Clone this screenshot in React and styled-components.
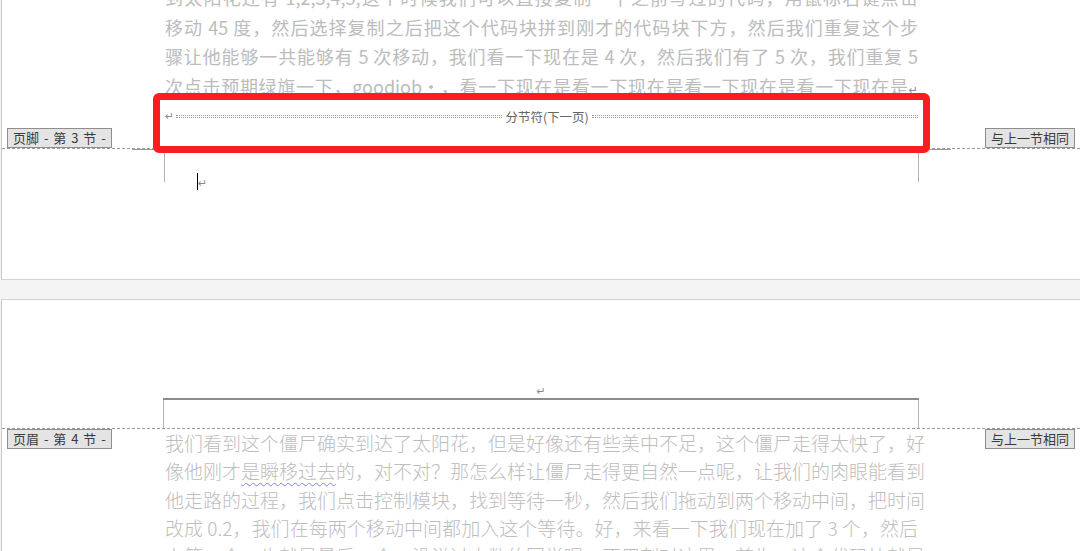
import styled, { createGlobalStyle } from "styled-components";

const GlobalStyle = createGlobalStyle`
  html, body {
    margin: 0;
    padding: 0;
    background: #fff;
  }
  body {
    font-family: "Noto Sans CJK SC", "Noto Sans", sans-serif;
  }
`;

const Viewport = styled.div`
  width: 1080px;
  height: 551px;
  overflow: hidden;
  background: #f4f4f4;
  padding-left: 1px;
  box-sizing: border-box;
`;

// the document is scrolled a little, so the first line is cut at the top
const Scroller = styled.div`
  margin-top: -17px;
  display: flex;
  flex-direction: column;
  gap: 19px;
`;

const Page = styled.section`
  background: #fff;
  border-left: 1px solid #c9c9c9;
  border-top: ${(p) => (p.$first ? "none" : "1px solid #d3d3d3")};
  border-bottom: 1px solid #d3d3d3;
`;

const BodyGrid = styled.div`
  display: grid;
  grid-template-columns: 163px 753px 1fr;
  border-bottom: ${(p) => (p.$dashed ? "1px dashed #9a9a9a" : "none")};
`;

const MarginCell = styled.div`
  display: flex;
  flex-direction: column;
  justify-content: ${(p) => (p.$top ? "flex-start" : "flex-end")};
  align-items: ${(p) => (p.$right ? "flex-end" : "flex-start")};
  padding: 0 5px;
`;

const Tag = styled.div`
  height: 20px;
  box-sizing: border-box;
  padding: 0 5px;
  border: 1px solid #8e8e8e;
  background: #e4e4e4;
  color: #3a3a3a;
  font-size: 13px;
  line-height: 18px;
  word-spacing: 2px;
  white-space: pre;
`;

const TextColumn = styled.div`
  display: flex;
  flex-direction: column;
  padding-bottom: ${(p) => p.$bottom || 0}px;
`;

const Line = styled.div`
  height: ${(p) => p.$h}px;
  line-height: ${(p) => p.$h}px;
  font-size: ${(p) => p.$size}px;
  font-weight: ${(p) => p.$weight || 400};
  color: ${(p) => p.$color || "#bcbcbc"};
  text-align: justify;
  text-align-last: justify;
  white-space: nowrap;
`;

const Squiggle = styled.span`
  text-decoration: underline wavy #7a86ff;
  text-decoration-thickness: 1px;
  text-underline-offset: 3px;
`;

const Mark = styled.span`
  color: #8a8a8a;
  font-size: ${(p) => p.$size || 11}px;
  font-family: "DejaVu Sans", sans-serif;
`;

const BreakRow = styled.div`
  position: relative;
  height: 30px;
  display: flex;
  align-items: center;
  gap: 2px;
`;

const Dots = styled.div`
  flex: 1;
  height: 1px;
  border-top: 1px dotted #9c9c9c;
  border-bottom: 1px dotted #9c9c9c;
`;

const BreakLabel = styled.span`
  font-size: 12.5px;
  color: #666;
  padding: 0 1px;
`;

const Highlight = styled.div`
  position: absolute;
  left: -12px;
  right: -12px;
  top: -8px;
  bottom: -22px;
  border: 7px solid #fb1e1e;
  border-radius: 6px;
  z-index: 2;
  pointer-events: none;
`;

const FooterGrid = styled.div`
  display: grid;
  grid-template-columns: 130px 33px 753px 33px 1fr;
  height: 130px;
  align-items: start;
`;

const Corner = styled.div`
  height: 33px;
  box-sizing: border-box;
  border-top: 1px solid #9a9a9a;
  border-right: ${(p) => (p.$right ? "none" : "1px solid #b4b4b4")};
  border-left: ${(p) => (p.$right ? "1px solid #b4b4b4" : "none")};
`;

const CaretPara = styled.div`
  padding: 24px 0 0 32px;
  display: flex;
  align-items: flex-end;
`;

const Caret = styled.span`
  display: inline-block;
  width: 1px;
  height: 17px;
  background: #000;
`;

const HeaderGrid = styled.div`
  display: grid;
  grid-template-columns: 161px 756px 1fr;
  height: 128px;
  border-bottom: 1px dashed #9a9a9a;
`;

const HeaderColumn = styled.div`
  display: flex;
  flex-direction: column;
  justify-content: flex-end;
`;

const HeaderPara = styled.div`
  height: 20px;
  line-height: 20px;
  text-align: center;
  border-bottom: 2px solid #8c8c8c;
`;

const HeaderEdges = styled.div`
  height: 28px;
  border-left: 1px solid #b4b4b4;
  border-right: 1px solid #b4b4b4;
`;

const pageOneLines = [
  "到太阳花还有 1,2,3,4,5,这个时候我们可以直接复制一下之前写过的代码，用鼠标右键点击",
  "移动 45 度，然后选择复制之后把这个代码块拼到刚才的代码块下方，然后我们重复这个步",
  "骤让他能够一共能够有 5 次移动，我们看一下现在是 4 次，然后我们有了 5 次，我们重复 5",
];

const pageTwoLines = [
  "他走路的过程，我们点击控制模块，找到等待一秒，然后我们拖动到两个移动中间，把时间",
  "改成 0.2，我们在每两个移动中间都加入这个等待。好，来看一下我们现在加了 3 个，然后",
  "上第一个，也就是最后一个，没说过大数的同学呢，不用刻对这里，首先，这个代码块就是",
];

const App = () => {
  return (
    <Viewport>
      <GlobalStyle />
      <Scroller>
        <Page $first>
          <BodyGrid $dashed>
            <MarginCell>
              <Tag>页脚 - 第 3 节 -</Tag>
            </MarginCell>
            <TextColumn $bottom={17}>
              {pageOneLines.map((t) => (
                <Line key={t} $h={29.5} $size={18}>{t}</Line>
              ))}
              <Line $h={29.5} $size={18}>
                次点击预期绿旗一下，goodjob·，看一下现在是看一下现在是看一下现在是看一下现在是<Mark>↵</Mark>
              </Line>
              <BreakRow>
                <Mark>↵</Mark>
                <Dots />
                <BreakLabel>分节符(下一页)</BreakLabel>
                <Dots />
                <Highlight />
              </BreakRow>
            </TextColumn>
            <MarginCell $right>
              <Tag>与上一节相同</Tag>
            </MarginCell>
          </BodyGrid>
          <FooterGrid>
            <div />
            <Corner />
            <CaretPara>
              <Caret />
              <Mark>↵</Mark>
            </CaretPara>
            <Corner $right />
            <div />
          </FooterGrid>
        </Page>

        <Page>
          <HeaderGrid>
            <div />
            <HeaderColumn>
              <HeaderPara>
                <Mark>↵</Mark>
              </HeaderPara>
              <HeaderEdges />
            </HeaderColumn>
            <div />
          </HeaderGrid>
          <BodyGrid>
            <MarginCell $top>
              <Tag>页眉 - 第 4 节 -</Tag>
            </MarginCell>
            <TextColumn>
              <Line $h={28.3} $size={19} $weight={300} $color="#bdbdbd">
                我们看到这个僵尸确实到达了太阳花，但是好像还有些美中不足，这个僵尸走得太快了，好
              </Line>
              <Line $h={28.3} $size={19} $weight={300} $color="#bdbdbd">
                像他刚才<Squiggle>是瞬移过去</Squiggle>的，对不对？那怎么样让僵尸走得更自然一点呢，让我们的肉眼能看到
              </Line>
              {pageTwoLines.map((t) => (
                <Line key={t} $h={28.3} $size={19} $weight={300} $color="#bdbdbd">{t}</Line>
              ))}
            </TextColumn>
            <MarginCell $top $right>
              <Tag>与上一节相同</Tag>
            </MarginCell>
          </BodyGrid>
        </Page>
      </Scroller>
    </Viewport>
  );
};

export default App;
